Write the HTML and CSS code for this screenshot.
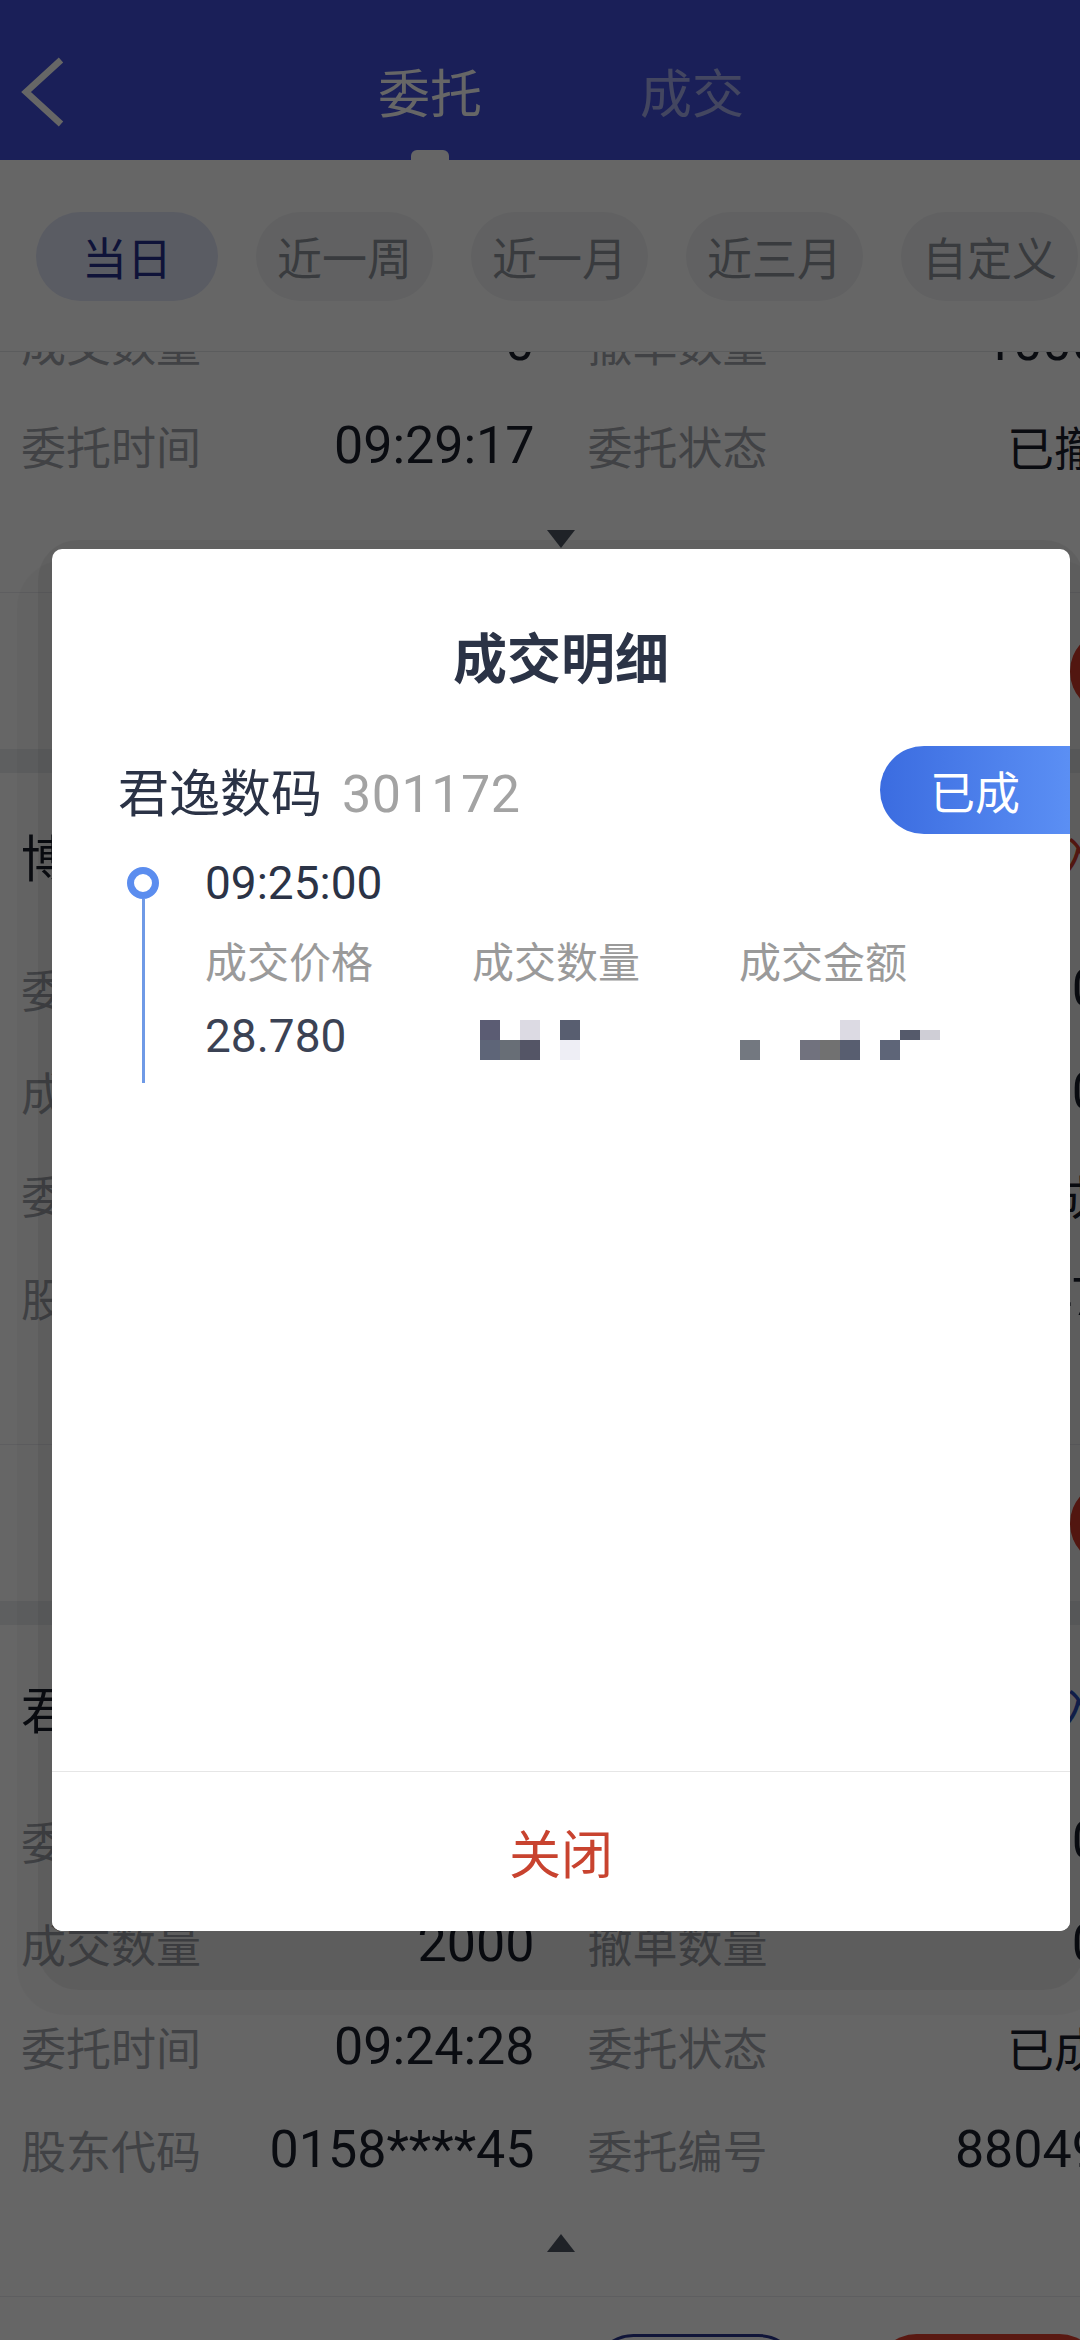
FILE: index.html
```html
<!DOCTYPE html>
<html lang="zh-CN">
<head>
<meta charset="utf-8">
<title>委托</title>
<link rel="stylesheet" href="styles.css">
</head>
<body>
<div class="screen">
  <header class="topbar">
    <div class="back">
      <svg viewBox="0 0 44 72" aria-hidden="true"><path d="M40 4 L5 36 L40 68" fill="none" stroke="#fff" stroke-width="6.5" stroke-linejoin="miter"/></svg>
    </div>
    <nav class="tabs">
      <div class="tab active"><span>委托</span><i class="tab-ind"></i></div>
      <div class="tab"><span>成交</span></div>
    </nav>
    <div></div>
  </header>

  <div class="filters">
    <div class="chip active">当日</div>
    <div class="chip">近一周</div>
    <div class="chip">近一月</div>
    <div class="chip">近三月</div>
    <div class="chip">自定义</div>
  </div>

  <div class="list">
    <div class="list-inner">
      <section class="card">
        <div class="info-row">
          <div class="cell"><span class="lbl">成交数量</span><span class="val">0</span></div>
          <div class="cell"><span class="lbl">撤单数量</span><span class="val">1000</span></div>
        </div>
        <div class="info-row">
          <div class="cell"><span class="lbl">委托时间</span><span class="val">09:29:17</span></div>
          <div class="cell"><span class="lbl">委托状态</span><span class="val-cjk">已撤</span></div>
        </div>
        <div class="toggle"><i class="tri-down"></i></div>
        <div class="actions alt"><span class="btn btn-outline">详情</span><span class="btn btn-red">撤单</span></div>
      </section>
      <div class="band"></div>

      <section class="card">
        <div class="card-name-row"><span class="card-name">博杰股份</span><span class="card-side side-red">普通买入</span></div>
        <div class="info-row">
          <div class="cell"><span class="lbl">委托价格</span><span class="val">12.350</span></div>
          <div class="cell"><span class="lbl">委托数量</span><span class="val">500</span></div>
        </div>
        <div class="info-row">
          <div class="cell"><span class="lbl">成交数量</span><span class="val">500</span></div>
          <div class="cell"><span class="lbl">撤单数量</span><span class="val">0</span></div>
        </div>
        <div class="info-row">
          <div class="cell"><span class="lbl">委托时间</span><span class="val">09:26:41</span></div>
          <div class="cell"><span class="lbl">委托状态</span><span class="val-cjk">已成</span></div>
        </div>
        <div class="info-row">
          <div class="cell"><span class="lbl">股东代码</span><span class="val">0158****45</span></div>
          <div class="cell"><span class="lbl">委托编号</span><span class="val">88047</span></div>
        </div>
        <div class="toggle"><i class="tri-up"></i></div>
        <div class="actions alt"><span class="btn btn-outline">详情</span><span class="btn btn-red">撤单</span></div>
      </section>
      <div class="band"></div>

      <section class="card">
        <div class="card-name-row"><span class="card-name">君逸数码</span><span class="card-side side-blue">担保买入</span></div>
        <div class="info-row">
          <div class="cell"><span class="lbl">委托价格</span><span class="val">28.780</span></div>
          <div class="cell"><span class="lbl">委托数量</span><span class="val">2000</span></div>
        </div>
        <div class="info-row">
          <div class="cell"><span class="lbl">成交数量</span><span class="val">2000</span></div>
          <div class="cell"><span class="lbl">撤单数量</span><span class="val">0</span></div>
        </div>
        <div class="info-row">
          <div class="cell"><span class="lbl">委托时间</span><span class="val">09:24:28</span></div>
          <div class="cell"><span class="lbl">委托状态</span><span class="val-cjk">已成</span></div>
        </div>
        <div class="info-row">
          <div class="cell"><span class="lbl">股东代码</span><span class="val">0158****45</span></div>
          <div class="cell"><span class="lbl">委托编号</span><span class="val">88049</span></div>
        </div>
        <div class="toggle"><i class="tri-up"></i></div>
        <div class="actions"><span class="btn btn-outline">详情</span><span class="btn btn-red">再买入</span></div>
      </section>
    </div>
  </div>

  <div class="mask"></div>
  <div class="ghost ghost-outer"></div>
  <div class="ghost ghost-inner"></div>

  <div class="modal">
    <h2 class="modal-title">成交明细</h2>
    <div class="stock-row">
      <div class="stock"><span class="stock-name">君逸数码</span><span class="stock-code">301172</span></div>
      <div class="status-badge">已成</div>
    </div>
    <div class="tl-item">
      <div class="tl-rail"><span class="tl-dot"></span><span class="tl-line"></span></div>
      <div class="tl-body">
        <div class="tl-time">09:25:00</div>
        <div class="tl-grid">
          <span class="tl-label">成交价格</span>
          <span class="tl-label">成交数量</span>
          <span class="tl-label">成交金额</span>
          <span class="tl-value">28.780</span>
          <div class="tl-value">
            <div class="mosaic mosaic-qty">
              <i class="tile ta"></i><i class="tile"></i><i class="tile tl1"></i><i class="tile"></i><i class="tile tb"></i>
              <i class="tile tc"></i><i class="tile td"></i><i class="tile te"></i><i class="tile"></i><i class="tile tl2"></i>
            </div>
          </div>
          <div class="tl-value">
            <div class="mosaic mosaic-amt">
              <i class="tile"></i><i class="tile"></i><i class="tile"></i><i class="tile"></i><i class="tile"></i><i class="tile tl1"></i><i class="tile"></i><i class="tile"></i><i class="tile tf half"></i><i class="tile tl3 half"></i>
              <i class="tile tg"></i><i class="tile"></i><i class="tile"></i><i class="tile th"></i><i class="tile ti"></i><i class="tile tb"></i><i class="tile"></i><i class="tile tc"></i><i class="tile"></i><i class="tile"></i>
            </div>
          </div>
        </div>
      </div>
    </div>
    <div class="modal-spacer"></div>
    <button class="modal-close" type="button">关闭</button>
  </div>
</div>
</body>
</html>
```

FILE: styles.css
```css
html, body {
  margin: 0;
  padding: 0;
  width: 1080px;
  height: 2340px;
  overflow: hidden;
  background: #fff;
}

body {
  font-family: "Noto Sans CJK SC", "Noto Sans", sans-serif;
}

.screen {
  position: relative;
  width: 1122px;
  height: 2340px;
  overflow: hidden;
  background: #fff;
  display: flex;
  flex-direction: column;
}

/* ---------- top bar ---------- */
.topbar {
  flex: none;
  height: 160px;
  background: #414edc;
  display: grid;
  grid-template-columns: 1fr auto 1fr;
}

.back {
  padding: 56px 0 0 21px;
}

.back svg {
  display: block;
  width: 44px;
  height: 72px;
}

.tabs {
  display: flex;
  gap: 158px;
}

.tab {
  width: 104px;
  box-sizing: border-box;
  padding-top: 60px;
  display: flex;
  flex-direction: column;
  align-items: center;
  font-size: 52px;
  line-height: 62px;
  color: rgba(255, 255, 255, 0.55);
}

.tab.active {
  color: #fff;
}

.tab-ind {
  margin-top: auto;
  width: 38px;
  height: 10px;
  background: #fff;
  border-radius: 6px 6px 0 0;
}

/* ---------- filter chips ---------- */
.filters {
  flex: none;
  height: 192px;
  box-sizing: border-box;
  padding: 52px 0 0 36px;
  display: flex;
  gap: 38px;
  border-bottom: 1px solid #e4e5e8;
}

.chip {
  flex: none;
  height: 89px;
  padding: 0 21px;
  box-sizing: border-box;
  border-radius: 45px;
  background: #f2f3f5;
  color: #8e949c;
  font-size: 45px;
  display: flex;
  align-items: center;
  justify-content: center;
}

.chip.active {
  padding: 0 46px;
  background: #e1e6f8;
  color: #27318e;
}

/* ---------- order list ---------- */
.list {
  flex: 1;
  overflow: hidden;
}

.list-inner {
  margin-top: -61px;
}

.card {
  background: #fff;
}

.card-name-row {
  height: 164px;
  padding: 0 21px;
  display: flex;
  align-items: center;
  justify-content: space-between;
}

.card-name {
  font-size: 50px;
  color: #1b202c;
}

.card-side {
  font-size: 45px;
}

.side-red {
  color: #e0402e;
}

.side-blue {
  color: #2d52c4;
}

.info-row {
  height: 103px;
  padding: 0 21px;
  display: grid;
  grid-template-columns: 1fr 1fr;
  column-gap: 53px;
  align-items: center;
}

.cell {
  display: flex;
  align-items: center;
  justify-content: space-between;
}

.lbl {
  font-size: 45px;
  color: #a2a6ac;
}

.val {
  font-family: Roboto, "Noto Sans CJK SC", sans-serif;
  font-size: 52px;
  color: #1b202c;
}

.val-cjk {
  font-size: 47px;
  color: #1b202c;
}

.toggle {
  height: 96px;
  box-sizing: border-box;
  padding-top: 33px;
  display: flex;
  justify-content: center;
  align-items: flex-start;
  border-bottom: 1px solid #ececef;
}

.tri-down {
  width: 0;
  height: 0;
  border-left: 14px solid transparent;
  border-right: 14px solid transparent;
  border-top: 18px solid #4e5663;
}

.tri-up {
  width: 0;
  height: 0;
  border-left: 14px solid transparent;
  border-right: 14px solid transparent;
  border-bottom: 18px solid #4e5663;
}

.actions {
  height: 156px;
  padding-right: 21px;
  display: flex;
  justify-content: flex-end;
  align-items: center;
  gap: 75px;
}

.actions.alt {
  margin-right: -195px;
}

.btn {
  height: 83px;
  box-sizing: border-box;
  border-radius: 42px;
  font-size: 45px;
  display: flex;
  align-items: center;
  justify-content: center;
}

.btn-outline {
  width: 208px;
  border: 3px solid #2a3590;
  color: #2a3590;
  background: #fff;
}

.btn-red {
  width: 226px;
  background: #e0402e;
  color: #fff;
}

.band {
  height: 24px;
  background: #eceef1;
}

/* ---------- dimming mask ---------- */
.mask {
  position: absolute;
  inset: 0;
  background: rgba(0, 0, 0, 0.6);
}

.ghost {
  position: absolute;
  pointer-events: none;
}

.ghost-outer {
  left: 17px;
  top: 560px;
  width: 1088px;
  height: 1455px;
  border-radius: 48px;
  background: rgba(0, 0, 0, 0.025);
}

.ghost-inner {
  left: 38px;
  top: 540px;
  width: 1046px;
  height: 1450px;
  border-radius: 40px;
  background: rgba(0, 0, 0, 0.05);
}

/* ---------- modal ---------- */
.modal {
  position: absolute;
  left: 52px;
  top: 549px;
  width: 1018px;
  height: 1382px;
  background: #fff;
  border-radius: 10px;
  overflow: hidden;
  display: flex;
  flex-direction: column;
}

.modal-title {
  margin: 0;
  padding-top: 74px;
  font-size: 54px;
  line-height: 65px;
  font-weight: 700;
  text-align: center;
  color: #2b3346;
}

.stock-row {
  margin-top: 58px;
  height: 88px;
  padding-left: 66px;
  display: flex;
  align-items: center;
  justify-content: space-between;
}

.stock {
  display: flex;
  align-items: baseline;
}

.stock-name {
  font-size: 51px;
  color: #2b3346;
}

.stock-code {
  margin-left: 20px;
  font-family: Roboto, "Noto Sans CJK SC", sans-serif;
  font-size: 52px;
  letter-spacing: 0.5px;
  color: #a3a3a3;
}

.status-badge {
  width: 190px;
  height: 88px;
  border-radius: 44px 0 0 44px;
  background: linear-gradient(90deg, #3b6ce0, #5b8ff4);
  color: #fff;
  font-size: 45px;
  display: flex;
  align-items: center;
  justify-content: center;
}

.tl-item {
  margin-top: 31px;
  display: flex;
}

.tl-rail {
  margin-left: 75px;
  width: 32px;
  display: flex;
  flex-direction: column;
  align-items: center;
}

.tl-dot {
  margin-top: 2px;
  width: 32px;
  height: 32px;
  box-sizing: border-box;
  border: 7px solid #5b8def;
  border-radius: 50%;
  background: #fff;
}

.tl-line {
  flex: 1;
  width: 3px;
  background: #6f9ae6;
}

.tl-body {
  margin-left: 46px;
  padding-bottom: 20px;
}

.tl-time {
  font-family: Roboto, "Noto Sans CJK SC", sans-serif;
  font-size: 46px;
  line-height: 36px;
  color: #2b3346;
}

.tl-grid {
  margin-top: 34px;
  display: grid;
  grid-template-columns: 267px 267px 267px;
  row-gap: 24px;
}

.tl-label {
  font-size: 42px;
  line-height: 50px;
  color: #9a9a9a;
}

.tl-value {
  font-family: Roboto, "Noto Sans CJK SC", sans-serif;
  font-size: 46px;
  line-height: 54px;
  height: 54px;
  color: #3b4254;
}

.mosaic {
  display: grid;
  grid-auto-rows: 20px;
  margin-top: 11px;
}

.mosaic-qty {
  margin-left: 8px;
  grid-template-columns: repeat(5, 20px);
}

.mosaic-amt {
  margin-left: 1px;
  grid-template-columns: repeat(10, 20px);
}

.tile {
  display: block;
  width: 20px;
  height: 20px;
}

.tile.half {
  height: 10px;
  margin-top: 10px;
}

.ta { background: #5b5c73; }
.tb { background: #585e70; }
.tc { background: #5e6578; }
.td { background: #686e76; }
.te { background: #545566; }
.tf { background: #555a6b; }
.tg { background: #737880; }
.th { background: #71727e; }
.ti { background: #717171; }
.tl1 { background: #dcdae3; }
.tl2 { background: #eeeef5; }
.tl3 { background: #cfced6; }

.modal-spacer {
  flex: 1;
}

.modal-close {
  flex: none;
  height: 160px;
  margin: 0;
  padding: 0;
  border: 0;
  border-top: 1px solid #e6e6e6;
  background: #fff;
  font-family: "Noto Sans CJK SC", sans-serif;
  font-size: 52px;
  color: #c8432f;
}
```
